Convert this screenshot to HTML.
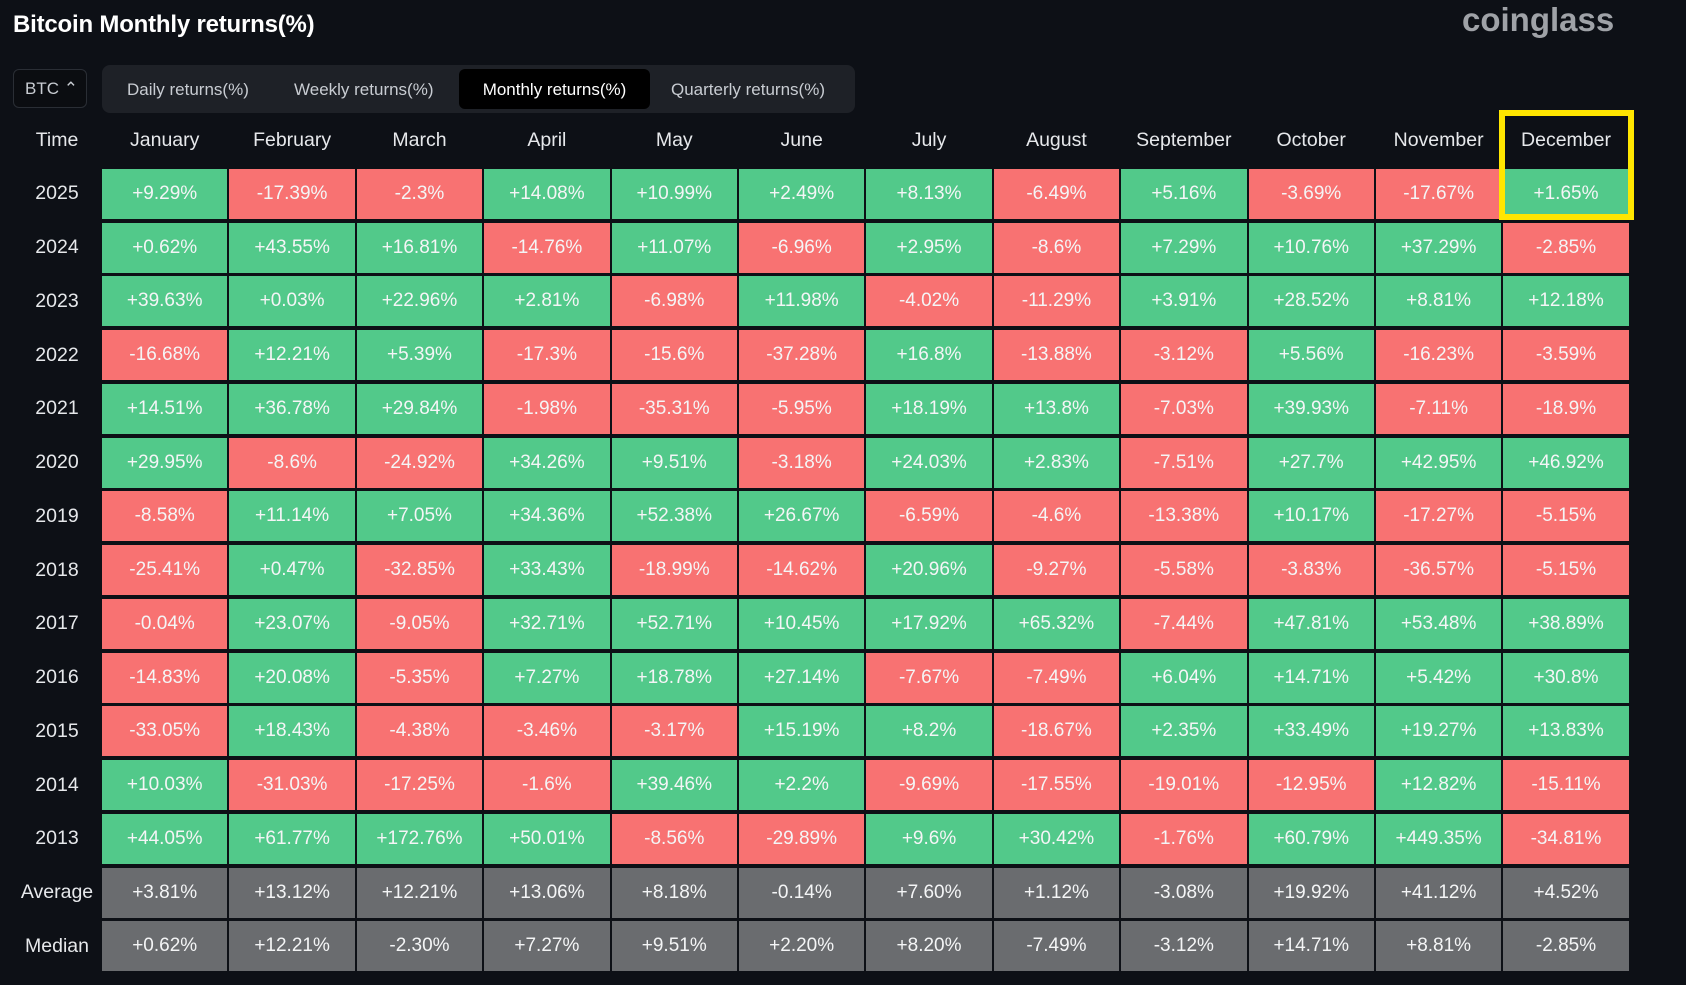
<!DOCTYPE html>
<html><head><meta charset="utf-8"><style>
body{margin:0;width:1686px;height:985px;background:#0d1016;overflow:hidden;font-family:"Liberation Sans",sans-serif;color:#eef0f2;position:relative}
.title{position:absolute;left:13px;top:11px;font-size:24px;font-weight:bold;color:#fff;letter-spacing:-0.2px}
.logo{position:absolute;left:1462px;top:1px;font-size:33px;font-weight:bold;color:#9fa2a7}
.btc{position:absolute;left:13px;top:69px;width:74px;height:39px;border:1px solid #2a2e35;border-radius:6px;background:#0b0d11;box-sizing:border-box;font-size:17px;color:#c8ccd2;line-height:37px;padding-left:11px}
.tabs{position:absolute;left:102px;top:65px;width:753px;height:48px;background:#1e2127;border-radius:8px}
.tab{position:absolute;top:4px;height:40px;line-height:42px;font-size:17px;color:#c8ccd2}
.act{background:#000;border-radius:6px;color:#fff}
.grid{position:absolute;left:0;top:115px;display:grid;grid-template-columns:100px repeat(12,125.4px);column-gap:2px;grid-template-rows:50px repeat(15,50px);row-gap:3.75px}
.grid div{display:flex;align-items:center;justify-content:center;font-size:19px;color:#f4f5f6}
.grid .h{color:#e6e8eb;font-size:19.5px}
.grid div:nth-child(13n+1){padding-left:14px}
.g{background:#52c98a}.r{background:#f87272}.n{background:#6a6c6f}
.hl{position:absolute;left:1499px;top:110px;width:135px;height:110px;border:6px solid #ffe600;box-sizing:border-box}
</style></head><body>
<div class="title">Bitcoin Monthly returns(%)</div>
<div class="logo">coinglass</div>
<div class="btc">BTC ⌃</div>
<div class="tabs">
<div class="tab" style="left:25px">Daily returns(%)</div>
<div class="tab" style="left:192px">Weekly returns(%)</div>
<div class="tab act" style="left:357px;width:191px;text-align:center">Monthly returns(%)</div>
<div class="tab" style="left:569px">Quarterly returns(%)</div>
</div>
<div class="grid">
<div class="h">Time</div><div class="h">January</div><div class="h">February</div><div class="h">March</div><div class="h">April</div><div class="h">May</div><div class="h">June</div><div class="h">July</div><div class="h">August</div><div class="h">September</div><div class="h">October</div><div class="h">November</div><div class="h">December</div>
<div class="h">2025</div><div class="g">+9.29%</div><div class="r">-17.39%</div><div class="r">-2.3%</div><div class="g">+14.08%</div><div class="g">+10.99%</div><div class="g">+2.49%</div><div class="g">+8.13%</div><div class="r">-6.49%</div><div class="g">+5.16%</div><div class="r">-3.69%</div><div class="r">-17.67%</div><div class="g">+1.65%</div>
<div class="h">2024</div><div class="g">+0.62%</div><div class="g">+43.55%</div><div class="g">+16.81%</div><div class="r">-14.76%</div><div class="g">+11.07%</div><div class="r">-6.96%</div><div class="g">+2.95%</div><div class="r">-8.6%</div><div class="g">+7.29%</div><div class="g">+10.76%</div><div class="g">+37.29%</div><div class="r">-2.85%</div>
<div class="h">2023</div><div class="g">+39.63%</div><div class="g">+0.03%</div><div class="g">+22.96%</div><div class="g">+2.81%</div><div class="r">-6.98%</div><div class="g">+11.98%</div><div class="r">-4.02%</div><div class="r">-11.29%</div><div class="g">+3.91%</div><div class="g">+28.52%</div><div class="g">+8.81%</div><div class="g">+12.18%</div>
<div class="h">2022</div><div class="r">-16.68%</div><div class="g">+12.21%</div><div class="g">+5.39%</div><div class="r">-17.3%</div><div class="r">-15.6%</div><div class="r">-37.28%</div><div class="g">+16.8%</div><div class="r">-13.88%</div><div class="r">-3.12%</div><div class="g">+5.56%</div><div class="r">-16.23%</div><div class="r">-3.59%</div>
<div class="h">2021</div><div class="g">+14.51%</div><div class="g">+36.78%</div><div class="g">+29.84%</div><div class="r">-1.98%</div><div class="r">-35.31%</div><div class="r">-5.95%</div><div class="g">+18.19%</div><div class="g">+13.8%</div><div class="r">-7.03%</div><div class="g">+39.93%</div><div class="r">-7.11%</div><div class="r">-18.9%</div>
<div class="h">2020</div><div class="g">+29.95%</div><div class="r">-8.6%</div><div class="r">-24.92%</div><div class="g">+34.26%</div><div class="g">+9.51%</div><div class="r">-3.18%</div><div class="g">+24.03%</div><div class="g">+2.83%</div><div class="r">-7.51%</div><div class="g">+27.7%</div><div class="g">+42.95%</div><div class="g">+46.92%</div>
<div class="h">2019</div><div class="r">-8.58%</div><div class="g">+11.14%</div><div class="g">+7.05%</div><div class="g">+34.36%</div><div class="g">+52.38%</div><div class="g">+26.67%</div><div class="r">-6.59%</div><div class="r">-4.6%</div><div class="r">-13.38%</div><div class="g">+10.17%</div><div class="r">-17.27%</div><div class="r">-5.15%</div>
<div class="h">2018</div><div class="r">-25.41%</div><div class="g">+0.47%</div><div class="r">-32.85%</div><div class="g">+33.43%</div><div class="r">-18.99%</div><div class="r">-14.62%</div><div class="g">+20.96%</div><div class="r">-9.27%</div><div class="r">-5.58%</div><div class="r">-3.83%</div><div class="r">-36.57%</div><div class="r">-5.15%</div>
<div class="h">2017</div><div class="r">-0.04%</div><div class="g">+23.07%</div><div class="r">-9.05%</div><div class="g">+32.71%</div><div class="g">+52.71%</div><div class="g">+10.45%</div><div class="g">+17.92%</div><div class="g">+65.32%</div><div class="r">-7.44%</div><div class="g">+47.81%</div><div class="g">+53.48%</div><div class="g">+38.89%</div>
<div class="h">2016</div><div class="r">-14.83%</div><div class="g">+20.08%</div><div class="r">-5.35%</div><div class="g">+7.27%</div><div class="g">+18.78%</div><div class="g">+27.14%</div><div class="r">-7.67%</div><div class="r">-7.49%</div><div class="g">+6.04%</div><div class="g">+14.71%</div><div class="g">+5.42%</div><div class="g">+30.8%</div>
<div class="h">2015</div><div class="r">-33.05%</div><div class="g">+18.43%</div><div class="r">-4.38%</div><div class="r">-3.46%</div><div class="r">-3.17%</div><div class="g">+15.19%</div><div class="g">+8.2%</div><div class="r">-18.67%</div><div class="g">+2.35%</div><div class="g">+33.49%</div><div class="g">+19.27%</div><div class="g">+13.83%</div>
<div class="h">2014</div><div class="g">+10.03%</div><div class="r">-31.03%</div><div class="r">-17.25%</div><div class="r">-1.6%</div><div class="g">+39.46%</div><div class="g">+2.2%</div><div class="r">-9.69%</div><div class="r">-17.55%</div><div class="r">-19.01%</div><div class="r">-12.95%</div><div class="g">+12.82%</div><div class="r">-15.11%</div>
<div class="h">2013</div><div class="g">+44.05%</div><div class="g">+61.77%</div><div class="g">+172.76%</div><div class="g">+50.01%</div><div class="r">-8.56%</div><div class="r">-29.89%</div><div class="g">+9.6%</div><div class="g">+30.42%</div><div class="r">-1.76%</div><div class="g">+60.79%</div><div class="g">+449.35%</div><div class="r">-34.81%</div>
<div class="h">Average</div><div class="n">+3.81%</div><div class="n">+13.12%</div><div class="n">+12.21%</div><div class="n">+13.06%</div><div class="n">+8.18%</div><div class="n">-0.14%</div><div class="n">+7.60%</div><div class="n">+1.12%</div><div class="n">-3.08%</div><div class="n">+19.92%</div><div class="n">+41.12%</div><div class="n">+4.52%</div>
<div class="h">Median</div><div class="n">+0.62%</div><div class="n">+12.21%</div><div class="n">-2.30%</div><div class="n">+7.27%</div><div class="n">+9.51%</div><div class="n">+2.20%</div><div class="n">+8.20%</div><div class="n">-7.49%</div><div class="n">-3.12%</div><div class="n">+14.71%</div><div class="n">+8.81%</div><div class="n">-2.85%</div>
</div>
<div class="hl"></div>
</body></html>
